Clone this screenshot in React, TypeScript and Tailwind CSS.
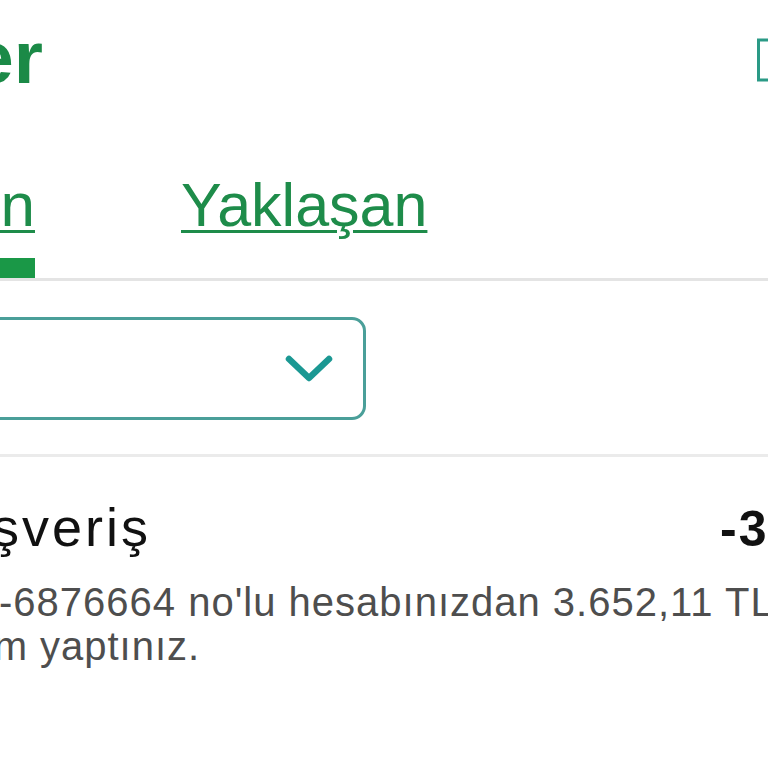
import React from 'react';

// Clipped mobile "İşlemler" screen: title, tabs, filter select, one transaction row.
function ClipLeft({ width, children }: { width: string; children: React.ReactNode }) {
  // right-aligned box; its content spills off to the left and the page clips it
  return <div className={`flex shrink-0 justify-end whitespace-nowrap ${width}`}>{children}</div>;
}

export default function App() {
  return (
    <div className="h-[768px] w-[768px] overflow-hidden bg-white font-['Liberation_Sans',Arial,sans-serif]">
      <div className="flex h-[174px] items-start">
        <div className="mt-[20px] flex w-[43px] shrink-0 justify-end whitespace-nowrap">
          <h1 className="text-[75px] font-bold leading-[75px] text-[#1b8a47]">İşlemler</h1>
        </div>
        <svg className="ml-auto mt-[38px] shrink-0" width="13" height="44" viewBox="0 0 13 44" fill="none" aria-hidden>
          <path d="M13 2H3.5V42H13" stroke="#2a9a86" strokeWidth="3" />
        </svg>
      </div>

      <div className="flex items-start">
        <div className="flex w-[35px] shrink-0 flex-col">
          <ClipLeft width="w-[35px]">
            <span className="text-[62px] leading-[62px] text-[#1e8c4a] underline decoration-[3px] underline-offset-[4px]">
              Gerçekleşen
            </span>
          </ClipLeft>
          <div className="mt-[22px] h-[20px] w-[35px] bg-[#1a9847]" />
        </div>
        <button
          type="button"
          className="ml-[146px] whitespace-nowrap text-[61px] leading-[62px] text-[#1e8c4a] underline decoration-[3px] underline-offset-[4px]"
        >
          Yaklaşan
        </button>
      </div>
      <div className="h-[3px] w-full bg-[#e4e4e4]" />

      <div className="mt-[36px] -ml-[20px] flex h-[103px] w-[386px] items-center justify-end rounded-[14px] border-[3px] border-[#4a9f99] pr-[30px]">
        <svg width="48" height="28" viewBox="0 0 48 28" fill="none" aria-hidden>
          <path d="M4 4L24 23L44 4" stroke="#1b9893" strokeWidth="6.5" strokeLinecap="round" strokeLinejoin="round" />
        </svg>
      </div>
      <div className="mt-[34px] h-[3px] w-full bg-[#ebebeb]" />

      <div className="mt-[44px] flex items-baseline">
        <ClipLeft width="w-[151px]">
          <span className="text-[54px] leading-[52px] tracking-[3px] text-[#111]">Alışveriş</span>
        </ClipLeft>
        <span className="ml-[569px] whitespace-nowrap text-[50px] font-bold leading-[52px] tracking-[2px] text-[#111]">
          -3.652,11 TL
        </span>
      </div>

      <div className="mt-[25px] text-[40px] leading-[44px] tracking-[1px] text-[#4e4e4e]">
        <p className="-ml-[1px] whitespace-nowrap">-6876664 no'lu hesabınızdan 3.652,11 TL</p>
        <div className="flex gap-[12px] whitespace-nowrap">
          <ClipLeft width="w-[28px]">
            <span>işlem</span>
          </ClipLeft>
          <span>yaptınız.</span>
        </div>
      </div>
    </div>
  );
}
